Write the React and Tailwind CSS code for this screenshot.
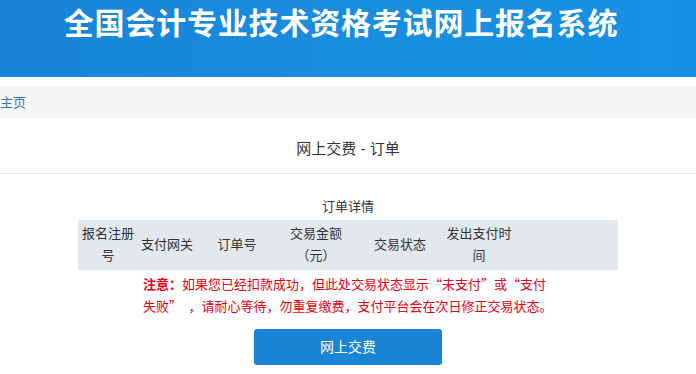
export default function App() {
  const cols = [
    { label: '报名注册号', w: 'w-[60px]' },
    { label: '支付网关', w: 'w-[58px]' },
    { label: '订单号', w: 'w-[82px]' },
    { label: '交易金额（元）', w: 'w-[76px]' },
    { label: '交易状态', w: 'w-[92px]' },
    { label: '发出支付时间', w: 'w-[66px]' },
    { label: '', w: '' },
  ]

  return (
    <div className="min-h-[374px] bg-white font-['Liberation_Sans','Noto_Sans_CJK_SC',sans-serif] text-[#333]">
      {/* Banner */}
      <div className="h-[77px] bg-gradient-to-r from-[#1783d9] via-[#198de0] to-[#1591e3] pt-[3px] pr-[14px] text-center">
        <h1 className="text-[30px] font-bold leading-[42px] tracking-[0.8px] text-white">
          全国会计专业技术资格考试网上报名系统
        </h1>
      </div>

      {/* Breadcrumb */}
      <div className="mt-[9px] flex h-[32px] items-center bg-[#f5f5f5]">
        <a className="text-[13px] leading-none text-[#3277c2]">主页</a>
      </div>

      {/* Page title */}
      <div className="border-b border-[#e6e6e6] pb-[13px] pt-[20px] text-center">
        <h2 className="text-[15px] leading-[22px] text-[#333]">网上交费 - 订单</h2>
      </div>

      {/* Order details */}
      <div className="pt-[22px]">
        <p className="mb-[2px] text-center text-[13px] leading-[22px]">订单详情</p>
        <table className="mx-auto w-[540px] table-fixed bg-[#e3e8ee] text-[13px] leading-[22px]">
          <thead>
            <tr>
              {cols.map((c, i) => (
                <th key={i} className={`${c.w} px-0 py-[3px] text-center align-middle font-normal`}>
                  {c.label}
                </th>
              ))}
            </tr>
          </thead>
        </table>

        <div className="mx-auto mt-[3px] w-[410px] font-['Noto_Sans_CJK_SC',sans-serif] text-[13px] leading-[22px] text-[#e60012]">
          <p className="whitespace-nowrap">
            <span className="font-bold">注意：</span>如果您已经扣款成功，但此处交易状态显示“未支付”或“支付
          </p>
          <p className="whitespace-nowrap">失败”　，请耐心等待，勿重复缴费，支付平台会在次日修正交易状态。</p>
        </div>

        <div className="mt-[12px] flex justify-center">
          <button className="h-[36px] w-[188px] rounded-[3px] bg-[#1a84d7] text-[14px] text-white">网上交费</button>
        </div>
      </div>
    </div>
  )
}
